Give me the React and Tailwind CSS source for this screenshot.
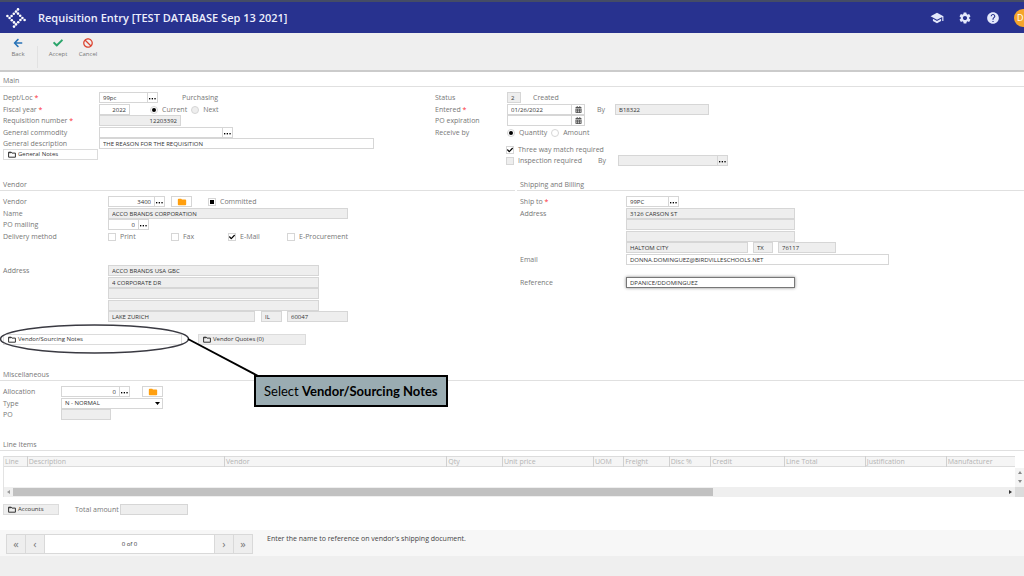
import clsx from 'clsx'
import { useEffect, useRef } from 'react'
import { FaArrowLeft, FaBan, FaCalendarAlt, FaCheck } from 'react-icons/fa'
import { MdFolder, MdHelp, MdSchool, MdSettings } from 'react-icons/md'

const columns = [
  ['Line', 'w-[2.3%]'],
  ['Description', 'w-[19.5%]'],
  ['Vendor', 'w-[22%]'],
  ['Qty', 'w-[5.5%]'],
  ['Unit price', 'w-[9%]'],
  ['UOM', 'w-[3%]'],
  ['Freight', 'w-[4.5%]'],
  ['Disc %', 'w-[4.1%]'],
  ['Credit', 'w-[7.3%]'],
  ['Line Total', 'w-[8%]'],
  ['Justification', 'w-[8%]'],
  ['Manufacturer', 'w-[6.8%]'],
]

// One side of the pinwheel, turned four times around the centre
const logoSide = [[12, 1.4], [10, 3.6], [7.8, 5.8], [5.6, 8]]

function Logo() {
  return (
    <svg viewBox="0 0 20 20" className="size-5 fill-white">
      {[0, 90, 180, 270].map((angle) => (
        <g key={angle} transform={`rotate(${angle} 10 10)`}>
          {logoSide.map(([x, y]) => <circle key={x} cx={x} cy={y} r="1.3" />)}
        </g>
      ))}
    </svg>
  )
}

function FolderOutline() {
  return (
    <svg viewBox="0 0 8 7" className="h-[7px] w-2 shrink-0" fill="none" stroke="#333">
      <path d="M.6 1.2h2.6l.8.9h3.4v4.1H.6z" />
      <path d="M.6 1.7h2.8" />
    </svg>
  )
}

function Section({ title, className, children }) {
  return (
    <section className={className}>
      <h2 className="h-[11px] border-b border-[#e0e0e0] pl-[3px] leading-[10px]">{title}</h2>
      <div className="pt-[5px] pl-[3px]">{children}</div>
    </section>
  )
}

// Rows sit 11px and 12px apart in turn
function Row({ label, htmlFor, required, labelWidth, children }) {
  return (
    <div className="flex h-[11px] items-center whitespace-nowrap even:mt-px">
      <label htmlFor={htmlFor} className={clsx('shrink-0', labelWidth)}>
        {label}
        {required && <span className="text-red-500"> *</span>}
      </label>
      {children}
    </div>
  )
}

function Field({ className, disabled, right, focused, ...props }) {
  return (
    <input
      type="text"
      readOnly={disabled}
      className={clsx(
        'h-[11px] min-w-0 border px-[3px] text-[6px] leading-[9px] text-[#333] outline-none',
        disabled ? 'bg-[#eeeeee]' : 'bg-white',
        focused ? 'border-[#777] shadow-[0_0_3px_#888]' : 'border-[#d6d6d6]',
        right && 'text-right',
        className,
      )}
      {...props}
    />
  )
}

function More({ label, disabled }) {
  return (
    <button
      aria-label={label}
      className={clsx(
        '-ml-px flex h-[11px] w-[11px] items-end justify-center border border-[#d6d6d6] pb-[2px]',
        disabled ? 'bg-[#eeeeee]' : 'bg-white',
      )}
    >
      <svg viewBox="0 0 7 2" className="h-[2px] w-[7px] fill-black">
        <rect width="1.3" height="1.4" />
        <rect x="2.7" width="1.3" height="1.4" />
        <rect x="5.4" width="1.3" height="1.4" />
      </svg>
    </button>
  )
}

function CalendarButton({ label }) {
  return (
    <button aria-label={label} className="-ml-px flex h-[11px] w-[14px] items-center justify-center border border-[#d6d6d6]">
      <FaCalendarAlt size={7} className="text-[#555]" />
    </button>
  )
}

function FolderButton({ label, className }) {
  return (
    <button aria-label={label} className={clsx('flex h-[11px] w-[21px] items-center justify-center border border-[#d6d6d6] text-[#ff9f0f]', className)}>
      <MdFolder size={10} />
    </button>
  )
}

function Radio({ label, muted, className, ...props }) {
  return (
    <label className={clsx('flex items-center gap-1', className)}>
      <input
        type="radio"
        className={clsx(
          'grid size-[8px] appearance-none place-content-center rounded-full border border-[#d6d6d6] before:size-[4px] before:rounded-full checked:before:bg-black',
          muted && 'bg-[#eeeeee]',
        )}
        {...props}
      />
      {label}
    </label>
  )
}

function Check({ label, partial, muted, className, ...props }) {
  const ref = useRef(null)
  useEffect(() => {
    ref.current.indeterminate = Boolean(partial)
  }, [partial])

  return (
    <label className={clsx('flex items-center gap-1', className)}>
      <span className="relative size-[8px]">
        <input
          ref={ref}
          type="checkbox"
          className={clsx(
            'peer grid size-[8px] appearance-none place-content-center border border-[#d6d6d6] before:size-[4px] indeterminate:before:bg-black',
            muted && 'bg-[#eeeeee]',
          )}
          {...props}
        />
        <FaCheck size={6} className="pointer-events-none absolute inset-px hidden text-black peer-checked:block" />
      </span>
      {label}
    </label>
  )
}

function NotesButton({ children, className }) {
  return (
    <button className={clsx('flex h-[11px] items-center gap-[2px] border border-[#dcdcdc] pl-1 text-[6px] text-[#333]', className)}>
      <FolderOutline />
      {children}
    </button>
  )
}

function Tool({ icon, label }) {
  return (
    <button className="flex w-[30px] flex-col items-center gap-[2px] text-[6px] leading-[9px] text-[#777]">
      {icon}
      {label}
    </button>
  )
}

function Header() {
  return (
    <header className="flex h-[33px] items-center overflow-hidden border-t-2 border-[#454c66] bg-[#28328f] pl-[6px] text-white">
      <Logo />
      <h1 className="ml-3 flex-1 text-[11px] leading-4 font-semibold whitespace-nowrap text-[#eceefc]">Requisition Entry [TEST DATABASE Sep 13 2021]</h1>
      <div className="flex items-center gap-[14px] text-[#e3e8fb]">
        <button aria-label="Learning"><MdSchool size={14} /></button>
        <button aria-label="Settings"><MdSettings size={14} /></button>
        <button aria-label="Help"><MdHelp size={14} /></button>
        <button aria-label="Account" className="-mr-2 size-[18px] rounded-full bg-[#f5a52b] pl-[3px] text-left text-[9px] text-white">
          D
        </button>
      </div>
    </header>
  )
}

function Toolbar() {
  return (
    <div className="flex h-[39px] items-start border-b-2 border-[#cbcbcb] bg-[#efefef] pt-[5px] pl-[3px]">
      <Tool icon={<FaArrowLeft size={10} className="text-[#2873b8]" />} label="Back" />
      <div className="mt-2 ml-1 h-[22px] border-l border-[#e2e2e2]" />
      <div className="ml-[5px] flex">
        <Tool icon={<FaCheck size={10} className="text-[#2aa56b]" />} label="Accept" />
        <Tool icon={<FaBan size={10} className="text-[#dc4430]" />} label="Cancel" />
      </div>
    </div>
  )
}

function MainSection() {
  return (
    <Section title="Main" className="pt-1">
      <div className="grid grid-cols-[432fr_589fr]">
        <div>
          <Row label="Dept/Loc" htmlFor="dept" required labelWidth="w-24">
            <Field id="dept" className="w-[49px]" defaultValue="99pc" />
            <More label="Find department" />
            <span className="ml-6">Purchasing</span>
          </Row>
          <Row label="Fiscal year" htmlFor="year" required labelWidth="w-24">
            <Field id="year" className="w-[31px]" right defaultValue="2022" />
            <Radio name="period" label="Current" defaultChecked className="ml-5" />
            <Radio name="period" label="Next" muted className="ml-1" />
          </Row>
          <Row label="Requisition number" htmlFor="req" required labelWidth="w-24">
            <Field id="req" className="w-[82px]" right disabled defaultValue="12203392" />
          </Row>
          <Row label="General commodity" htmlFor="commodity" labelWidth="w-24">
            <Field id="commodity" className="w-[124px]" />
            <More label="Find commodity" />
          </Row>
          <Row label="General description" htmlFor="description" labelWidth="w-24">
            <Field id="description" className="w-[275px]" defaultValue="THE REASON FOR THE REQUISITION" />
          </Row>
          <NotesButton className="w-[95px]">General Notes</NotesButton>
        </div>

        <div>
          <Row label="Status" htmlFor="status" labelWidth="w-[72px]">
            <Field id="status" className="w-[14px]" disabled defaultValue="2" />
            <span className="ml-3">Created</span>
          </Row>
          <Row label="Entered" htmlFor="entered" required labelWidth="w-[72px]">
            <Field id="entered" className="w-[65px]" defaultValue="01/26/2022" />
            <CalendarButton label="Pick entered date" />
            <label htmlFor="enteredBy" className="ml-3 w-[18px]">By</label>
            <Field id="enteredBy" className="w-[94px]" disabled defaultValue="B18322" />
          </Row>
          <Row label="PO expiration" htmlFor="expiration" labelWidth="w-[72px]">
            <Field id="expiration" className="w-[65px]" />
            <CalendarButton label="Pick expiration date" />
          </Row>
          <Row label="Receive by" labelWidth="w-[72px]">
            <Radio name="receive" label="Quantity" defaultChecked />
            <Radio name="receive" label="Amount" className="ml-1" />
          </Row>
          <div className="mt-[6px] pl-[71px]">
            <div className="flex h-[11px] items-center">
              <Check label="Three way match required" defaultChecked />
            </div>
            <div className="flex h-[11px] items-center">
              <Check label="Inspection required" muted />
              <label htmlFor="inspectBy" className="ml-4 w-5">By</label>
              <Field id="inspectBy" className="w-[100px]" disabled />
              <More label="Find inspector" disabled />
            </div>
          </div>
        </div>
      </div>
    </Section>
  )
}

function VendorSection() {
  return (
    <Section title="Vendor">
      <Row label="Vendor" htmlFor="vendor" labelWidth="w-[105px]">
        <Field id="vendor" className="w-[47px]" right defaultValue="3400" />
        <More label="Find vendor" />
        <FolderButton label="Open vendor" className="ml-[6px]" />
        <Check label="Committed" partial className="ml-4" />
      </Row>
      <Row label="Name" htmlFor="vendorName" labelWidth="w-[105px]">
        <Field id="vendorName" className="w-60" disabled defaultValue="ACCO BRANDS CORPORATION" />
      </Row>
      <Row label="PO mailing" htmlFor="mailing" labelWidth="w-[105px]">
        <Field id="mailing" className="w-[31px]" right defaultValue="0" />
        <More label="Find mailing address" />
      </Row>
      <Row label="Delivery method" labelWidth="w-[105px]">
        <Check label="Print" className="w-[63px]" />
        <Check label="Fax" className="w-[57px]" />
        <Check label="E-Mail" defaultChecked className="w-[59px]" />
        <Check label="E-Procurement" />
      </Row>
      <Row />
      <Row />
      <Row label="Address" htmlFor="address1" labelWidth="w-[105px]">
        <Field id="address1" className="w-[211px]" disabled defaultValue="ACCO BRANDS USA GBC" />
      </Row>
      <Row labelWidth="w-[105px]">
        <Field aria-label="Address line 2" className="w-[211px]" disabled defaultValue="4 CORPORATE DR" />
      </Row>
      <Row labelWidth="w-[105px]">
        <Field aria-label="Address line 3" className="w-[211px]" disabled />
      </Row>
      <Row labelWidth="w-[105px]">
        <Field aria-label="Address line 4" className="w-[211px]" disabled />
      </Row>
      <Row labelWidth="w-[105px]">
        <Field aria-label="City" className="w-[147px]" disabled defaultValue="LAKE ZURICH" />
        <Field aria-label="State" className="ml-[6px] w-[21px]" disabled defaultValue="IL" />
        <Field aria-label="Zip" className="ml-[5px] w-[61px]" disabled defaultValue="60047" />
      </Row>
      <div className="relative mt-3 flex">
        <NotesButton className="w-[179px]">Vendor/Sourcing Notes</NotesButton>
        <NotesButton className="ml-4 w-[108px] bg-[#eeeeee]">Vendor Quotes (0)</NotesButton>
        <Callout />
      </div>
    </Section>
  )
}

// Ring around the notes button, with its pointer and caption
function Callout() {
  return (
    <div className="pointer-events-none absolute -top-[10px] -left-[3px]">
      <svg width="262" height="56" viewBox="0 0 262 56" fill="none">
        <ellipse cx="94.5" cy="15" rx="94" ry="14" stroke="#3a3a42" strokeWidth="1.5" />
        <path d="M188 15l72 38" stroke="#000" strokeWidth="1.8" />
      </svg>
      <p className="absolute top-[51px] left-[254px] border-2 border-black bg-[#9aacb2] px-2 py-[5px] font-[Lato,sans-serif] text-[13px] leading-[18px] whitespace-nowrap text-black">
        Select <b>Vendor/Sourcing Notes</b>
      </p>
    </div>
  )
}

function ShippingSection() {
  return (
    <Section title="Shipping and Billing">
      <Row label="Ship to" htmlFor="shipTo" required labelWidth="w-[106px]">
        <Field id="shipTo" className="w-[43px]" defaultValue="99PC" />
        <More label="Find ship to" />
      </Row>
      <Row label="Address" htmlFor="ship1" labelWidth="w-[106px]">
        <Field id="ship1" className="w-[169px]" disabled defaultValue="3126 CARSON ST" />
      </Row>
      <Row labelWidth="w-[106px]">
        <Field aria-label="Ship address line 2" className="w-[169px]" disabled />
      </Row>
      <Row labelWidth="w-[106px]">
        <Field aria-label="Ship address line 3" className="w-[169px]" disabled />
      </Row>
      <Row labelWidth="w-[106px]">
        <Field aria-label="Ship city" className="w-[122px]" disabled defaultValue="HALTOM CITY" />
        <Field aria-label="Ship state" className="ml-[5px] w-5" disabled defaultValue="TX" />
        <Field aria-label="Ship zip" className="ml-[5px] w-[58px]" disabled defaultValue="76117" />
      </Row>
      <Row label="Email" htmlFor="email" labelWidth="w-[106px]">
        <Field id="email" className="w-[263px]" defaultValue="DONNA.DOMINGUEZ@BIRDVILLESCHOOLS.NET" />
      </Row>
      <Row />
      <Row label="Reference" htmlFor="reference" labelWidth="w-[106px]">
        <Field id="reference" className="w-[169px]" focused defaultValue="DPANICE/DDOMINGUEZ" />
      </Row>
    </Section>
  )
}

function MiscSection() {
  return (
    <Section title="Miscellaneous" className="mt-[25px]">
      <Row label="Allocation" htmlFor="allocation" labelWidth="w-[58px]">
        <Field id="allocation" className="w-[59px]" right defaultValue="0" />
        <More label="Find allocation" />
        <FolderButton label="Open allocation" className="ml-3" />
      </Row>
      <Row label="Type" htmlFor="type" labelWidth="w-[58px]">
        <span className="relative">
          <select id="type" className="block h-[11px] w-[102px] appearance-none border border-[#d6d6d6] bg-white px-[3px] text-[6px] leading-[9px] text-[#333]">
            <option>N - NORMAL</option>
          </select>
          <svg viewBox="0 0 5 3" className="pointer-events-none absolute top-1 right-[3px] h-[3px] w-[5px]">
            <path d="M0 0h5L2.5 3z" />
          </svg>
        </span>
      </Row>
      <Row label="PO" htmlFor="po" labelWidth="w-[58px]">
        <Field id="po" className="w-[50px]" disabled />
      </Row>
    </Section>
  )
}

function LineItems() {
  return (
    <section className="mt-5">
      <h2 className="h-[11px] border-b border-[#e0e0e0] pl-[3px] leading-[10px]">Line Items</h2>
      <div className="mt-[5px] ml-[3px] flex">
        <div className="min-w-0 flex-1 border-l border-[#e3e3e3]">
          <table className="w-full table-fixed border-collapse">
            <thead>
              <tr className="border-y border-[#dcdcdc] bg-[#f5f5f5]">
                {columns.map(([name, width]) => (
                  <th key={name} className={clsx('h-[10px] overflow-hidden border-r border-[#d0d0d0] p-0 pl-px text-left leading-[9px] font-normal whitespace-nowrap text-[#b4b4b4] last:border-r-0', width)}>
                    {name}
                  </th>
                ))}
              </tr>
            </thead>
            <tbody>
              <tr><td colSpan={columns.length} className="h-[20px] p-0" /></tr>
            </tbody>
          </table>
          <div className="flex h-[10px] items-center bg-[#efefef]">
            <svg viewBox="0 0 3 4" className="mx-[3px] h-1 w-[3px] fill-[#999]"><path d="M3 0v4L0 2z" /></svg>
            <div className="flex-1">
              <div className="h-2 w-[70.5%] bg-[#c1c1c1]" />
            </div>
            <svg viewBox="0 0 3 4" className="mx-[3px] h-1 w-[3px] fill-[#333]"><path d="M0 0v4l3-2z" /></svg>
          </div>
        </div>
        <div className="flex w-[9px] flex-col pt-3">
          <div className="flex flex-1 flex-col items-center justify-around bg-[#f4f4f4]">
            <svg viewBox="0 0 4 3" className="h-[3px] w-1 fill-[#888]"><path d="M0 3h4L2 0z" /></svg>
            <svg viewBox="0 0 4 3" className="h-[3px] w-1 fill-[#888]"><path d="M0 0h4L2 3z" /></svg>
          </div>
          <div className="h-[10px] bg-[#dcdcdc]" />
        </div>
      </div>
      <div className="mt-[7px] flex items-center pl-[3px]">
        <NotesButton className="w-14 bg-[#eeeeee]">Accounts</NotesButton>
        <label htmlFor="total" className="ml-4 w-[45px] whitespace-nowrap">Total amount</label>
        <Field id="total" className="w-[68px]" disabled />
      </div>
    </section>
  )
}

function Pager() {
  const button = 'w-[19px] border-[#d9d9d9] bg-[#eeeeee] text-[11px] leading-[16px] text-[#777]'
  return (
    <footer className="mt-[15px] flex h-[26px] items-start bg-[#f7f7f7] pt-1 pl-[6px]">
      <div className="flex h-5 w-[247px] border border-[#d9d9d9] bg-white">
        <button aria-label="First" className={clsx(button, 'border-r')}>«</button>
        <button aria-label="Previous" className={clsx(button, 'border-r')}>‹</button>
        <span className="flex-1 text-center text-[6px] leading-[18px] text-[#333]">0 of 0</span>
        <button aria-label="Next" className={clsx(button, 'border-l')}>›</button>
        <button aria-label="Last" className={clsx(button, 'border-l')}>»</button>
      </div>
      <p className="ml-[14px] leading-[9px] text-[#444]">Enter the name to reference on vendor's shipping document.</p>
    </footer>
  )
}

export default function App() {
  return (
    <div className="min-h-screen overflow-hidden bg-[#efefef] font-['Open_Sans','Noto_Sans',sans-serif] text-[7px] leading-[11px] text-[#777]">
      <Header />
      <Toolbar />
      <main className="bg-white">
        <MainSection />
        <div className="mt-[14px] grid grid-cols-[515fr_507fr] gap-[2px]">
          <VendorSection />
          <ShippingSection />
        </div>
        <MiscSection />
        <LineItems />
        <Pager />
      </main>
    </div>
  )
}
